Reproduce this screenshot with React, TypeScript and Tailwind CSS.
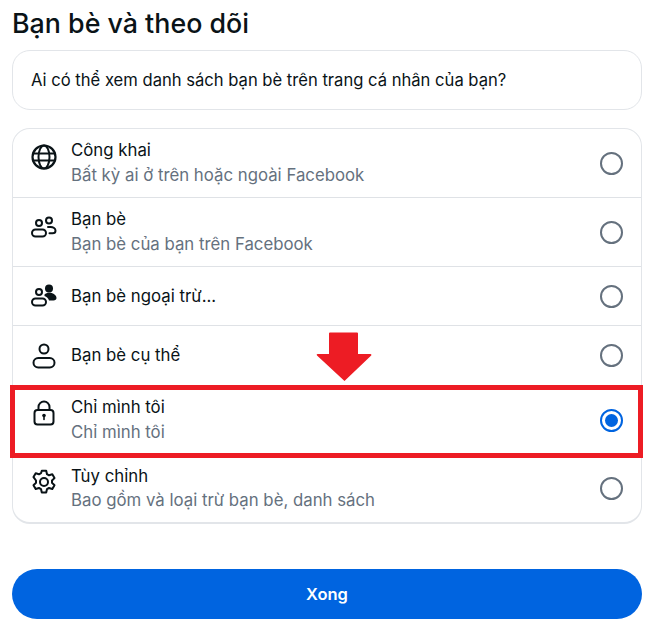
import React from "react";

const P = { fill: "none", stroke: "currentColor", strokeWidth: 2, strokeLinecap: "round" as const, strokeLinejoin: "round" as const };

const Globe = () => (
  <svg width="26" height="26" viewBox="0 0 26 26" {...P}>
    <circle cx="13" cy="13" r="11.500" strokeWidth="2.200" />
    <ellipse cx="13" cy="13" rx="5.500" ry="11.500" />
    <path d="M2 9.500h22M2 16.500h22" />
  </svg>
);
const Friends = () => (
  <svg width="26" height="26" viewBox="0 0 26 26" {...P}>
    <circle cx="8" cy="9" r="3" />
    <circle cx="18" cy="6.500" r="3" />
    <rect x="1" y="15.500" width="14" height="7" rx="3.500" />
    <path d="M17 13h2.500c2.800 0 5 1.700 5 3.700 0 1.600-1.200 2.500-3 2.500H18.500" />
  </svg>
);
const FriendsExcept = () => (
  <svg width="26" height="26" viewBox="0 0 26 26" {...P}>
    <circle cx="8" cy="9" r="3" />
    <rect x="1" y="15.500" width="14" height="7" rx="3.500" />
    <circle cx="18" cy="5.500" r="4" fill="currentColor" stroke="none" />
    <path d="M13.500 11.500c1-1.200 2.800-1.800 5-1.800 4 0 7 2.600 7 5.300 0 1.600-1.200 2.500-3 2.500h-4.500c-.5-2.200-2.300-3.800-4.500-4.500z" fill="currentColor" stroke="none" />
  </svg>
);
const Person = () => (
  <svg width="26" height="26" viewBox="0 0 26 26" {...P}>
    <circle cx="13" cy="6" r="4.500" />
    <rect x="2.500" y="15" width="21" height="9.500" rx="4.750" />
  </svg>
);
const Lock = () => (
  <svg width="26" height="26" viewBox="0 0 26 26" {...P}>
    <rect x="3.500" y="10" width="19" height="14.500" rx="3" />
    <path d="M7.500 10V7a5.500 5.500 0 0 1 11 0v3" />
    <circle cx="13" cy="15.500" r="1.800" fill="currentColor" stroke="none" />
    <path d="M13 16v3.500" strokeWidth="1.600" />
  </svg>
);
const Gear = () => (
  <svg width="26" height="26" viewBox="0 0 26 26" {...P}>
    <circle cx="13" cy="13" r="4" />
    <path d="M10.800 1.800h4.400l.8 3.400 2 1.100 3.300-1 2.200 3.800-2.500 2.400v2.300l2.500 2.400-2.200 3.800-3.300-1-2 1.100-.8 3.400h-4.400l-.8-3.400-2-1.100-3.300 1-2.200-3.800 2.500-2.400v-2.300L2.500 8.100l2.200-3.800 3.300 1 2-1.100z" />
  </svg>
);

type RowProps = { icon: React.ReactNode; title: string; sub?: string; h: string; iconPos?: string; textPos: string; subPos?: string; radioPos?: string; selected?: boolean; last?: boolean };

const Row = ({ icon, title, sub, h, iconPos, textPos, subPos, radioPos, selected, last }: RowProps) => (
  <div className={`flex items-center pl-[18px] pr-[18px] ${h} ${last ? "" : "border-b border-[#dfe2e6]"}`}>
    <div className={`w-[26px] shrink-0 flex text-[#0a1317] ${iconPos ?? ""}`}>{icon}</div>
    <div className={`ml-[14px] flex-1 min-w-0 ${textPos}`}>
      <div className="text-[16.800px] leading-[22px] text-[#0a1317]">{title}</div>
      {sub && <div className={`text-[16.800px] leading-[24px] text-[#65717e] ${subPos ?? ""}`}>{sub}</div>}
    </div>
    {selected ? (
      <div className="w-[23px] h-[23px] rounded-full border-2 border-[#0064e0] flex items-center justify-center shrink-0">
        <div className="w-[13px] h-[13px] rounded-full bg-[#0064e0]" />
      </div>
    ) : (
      <div className={`w-[23px] h-[23px] rounded-full border-2 border-[#65717e] shrink-0 ${radioPos ?? ""}`} />
    )}
  </div>
);

export default function App() {
  return (
    <div className="relative w-[655px] h-[627px] bg-white overflow-hidden pl-[12px] pr-[13px] font-['Inter','Noto_Sans',sans-serif]">
      <h1 className="text-[26.800px] leading-[30px] font-medium text-[#0a1317] pt-[8px] h-[50px] box-border">Bạn bè và theo dõi</h1>
      <div className="h-[60px] border border-[#e2e5e9] rounded-[18px] flex items-center pl-[18px] text-[16.600px] text-[#0a1317]">
        Ai có thể xem danh sách bạn bè trên trang cá nhân của bạn?
      </div>
      <div className="mt-[18px] h-[396px] border border-[#e2e5e9] border-b-2 rounded-[18px] overflow-hidden">
        <Row h="h-[69px]" iconPos="self-start pt-[15px]" textPos="-mt-[1px]" subPos="mt-[2px]" icon={<Globe />} title="Công khai" sub="Bất kỳ ai ở trên hoặc ngoài Facebook" />
        <Row h="h-[69px]" iconPos="self-start pt-[16px]" textPos="-mt-[1px]" subPos="mt-[2px]" icon={<Friends />} title="Bạn bè" sub="Bạn bè của bạn trên Facebook" />
        <Row h="h-[59px]" textPos="mt-0" icon={<FriendsExcept />} title="Bạn bè ngoại trừ..." />
        <Row h="h-[60px]" textPos="-mt-[1px]" icon={<Person />} title="Bạn bè cụ thể" />
        <Row h="h-[70px]" iconPos="self-start pt-[14px]" textPos="-mt-[2px]" subPos="mt-[2px]" icon={<Lock />} title="Chỉ mình tôi" sub="Chỉ mình tôi" selected />
        <Row h="h-[67px]" iconPos="self-start pt-[13px]" textPos="-mt-[2px]" subPos="mt-[1px]" radioPos="-mt-[2px]" icon={<Gear />} title="Tùy chỉnh" sub="Bao gồm và loại trừ bạn bè, danh sách" last />
      </div>
      <button className="mt-[45px] w-full h-[50px] rounded-full bg-[#0064e0] text-white text-[16.500px] font-semibold">Xong</button>

      <div className="absolute left-[10px] top-[385px] w-[633px] h-[73px] border-[5px] border-[#ed1c24]" />
      <svg className="absolute left-[316px] top-[332px]" width="56" height="50" viewBox="0 0 56 50">
        <path d="M13 1.500a1 1 0 0 1 1-1h27a1 1 0 0 1 1 1V22h12.500a1 1 0 0 1 .7 1.600L28.500 49 1 23.600A1 1 0 0 1 1.500 22H13z" fill="#ed1c24" />
      </svg>
    </div>
  );
}
